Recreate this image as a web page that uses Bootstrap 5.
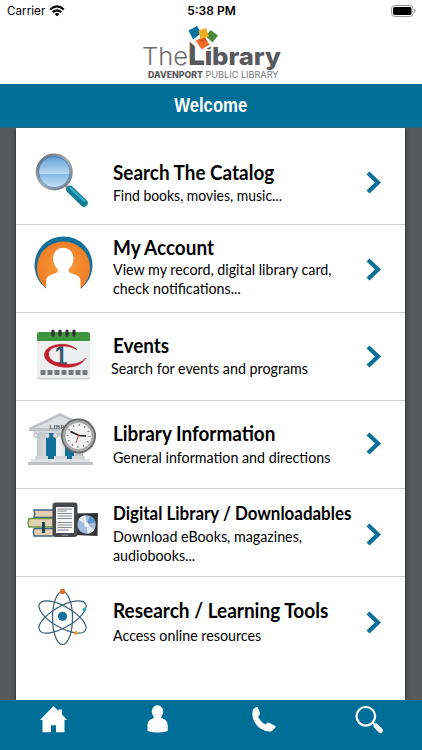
<!DOCTYPE html>
<html lang="en">
<head>
  <meta charset="UTF-8" />
  <meta name="viewport" content="width=device-width, initial-scale=1" />
  <title>Davenport Public Library</title>
  <link href="https://cdn.jsdelivr.net/npm/bootstrap@5.3.0/dist/css/bootstrap.min.css" rel="stylesheet" />
  <style>
    body {
      height: 750px;
      overflow: hidden;
      background: #58595b;
      color: #000;
      font-family: Lato, "Open Sans", sans-serif;
    }

    svg {
      display: block;
      flex-shrink: 0;
    }

    .status-bar {
      height: 22px;
      padding: 0 6px 0 7px;
      font: 400 11.7px/22px Inter, sans-serif;
    }

    .status-side {
      width: 120px;
    }

    .status-time {
      font-weight: 600;
      font-size: 12px;
    }

    .brand-area {
      height: 62px;
    }

    .page-title {
      position: relative;
      height: 44px;
      background: #006f98;
      color: #fff;
      font: bold 20px/42px "Liberation Sans", sans-serif;
      border-bottom: 1px solid #27647c;
      z-index: 1;
    }

    .page-title span {
      transform: scaleX(.835);
    }

    .menu-panel {
      width: 389px;
      height: 572px;
      margin-left: 16px;
      box-shadow: 0 0 4px #222;
    }

    .menu-row {
      height: 88px;
      color: #000;
      border-bottom: 1px solid #cfcfd1;
    }

    .menu-row:first-child { height: 97px; }
    .menu-row:last-child { height: 123px; border: 0; }

    .menu-copy {
      width: 252px;
      white-space: nowrap;
    }

    .menu-title {
      font-size: 20px;
      line-height: 24px;
      font-weight: 700;
      transform: scaleX(.945);
      transform-origin: left;
      margin: 0;
    }

    .menu-desc {
      font-size: 15.5px;
      line-height: 18.5px;
      transform: scaleX(.92);
      transform-origin: left;
      margin: 0;
    }

    .row-catalog .menu-copy { padding-top: 32px; }
    .row-catalog .menu-desc { margin-top: 2px; transform: scaleX(.9); }
    .row-catalog .chevron { margin-top: 43px; }
    .row-account .menu-copy { padding-top: 10px; }
    .row-account .menu-desc { margin-top: 1px; }
    .row-account .chevron { margin-top: 33px; }
    .row-events .menu-copy { padding-top: 20px; }
    .row-events .menu-desc { margin: 2px 0 0 -2px; }
    .row-events .chevron { margin-top: 32px; }
    .row-info .menu-copy { padding-top: 20px; }
    .row-info .menu-desc { margin-top: 3px; }
    .row-info .chevron { margin-top: 31px; }
    .row-digital .menu-copy { padding-top: 12px; }
    .row-digital .menu-title { font-size: 18.5px; transform: scaleX(.915); }
    .row-digital .menu-desc { margin-top: 2px; }
    .row-digital .chevron { margin-top: 34px; }
    .row-research .menu-copy { padding-top: 21px; }
    .row-research .menu-title { transform: scaleX(.95); }
    .row-research .menu-desc { margin-top: 4px; }
    .row-research .chevron { margin-top: 34px; }

    .tab-bar {
      position: relative;
      height: 50px;
      background: #006f98;
    }
  </style>
</head>
<body>
  <header class="bg-white">
    <div class="status-bar d-flex justify-content-between align-items-center">
      <div class="status-side d-flex align-items-center gap-1">
        <span>Carrier</span>
        <svg width="16" height="12" viewBox="0 0 16 12" fill="none" stroke="#000" stroke-width="2.2">
          <path d="M1.2 4.5Q8-1.6 14.8 4.5M3.7 7.3Q8 3.3 12.3 7.3" />
          <path d="M8 11.3 5.6 8.9Q8 7 10.4 8.9Z" fill="#000" stroke="none" />
        </svg>
      </div>
      <span class="status-time">5:38 PM</span>
      <div class="status-side d-flex justify-content-end">
        <svg width="25" height="12" viewBox="0 0 25 12">
          <rect x=".5" y=".5" width="21.5" height="11" rx="3.2" fill="#fff" stroke="#999" />
          <rect x="2" y="2" width="18.5" height="8" rx="1.8" />
          <path d="M23.3 4v4q1.4-.7 1.4-2t-1.4-2" fill="#999" />
        </svg>
      </div>
    </div>
    <div class="brand-area d-flex justify-content-center">
      <svg width="160" height="62" viewBox="131 22 160 62">
        <g font-family="Inter, sans-serif">
          <text x="142" y="65" font-size="24" font-weight="300" fill="#6d6e71" textLength="46" lengthAdjust="spacingAndGlyphs">The</text>
          <text x="188" y="65" font-size="32" font-weight="800" fill="#58595b" textLength="17" lengthAdjust="spacingAndGlyphs">L</text>
          <text x="204.500" y="65" font-size="26" font-weight="800" fill="#58595b" textLength="8" lengthAdjust="spacingAndGlyphs">i</text>
          <text x="212" y="65" font-size="24" font-weight="800" fill="#58595b" textLength="69" lengthAdjust="spacingAndGlyphs">brary</text>
          <text x="148" y="77.500" font-size="8.500" font-weight="800" fill="#58595b" textLength="55" lengthAdjust="spacingAndGlyphs">DAVENPORT</text>
          <text x="205.500" y="77.500" font-size="8.500" font-weight="400" fill="#77787b" textLength="73" lengthAdjust="spacingAndGlyphs">PUBLIC LIBRARY</text>
        </g>
        <path d="M186 38.500 201 51.500 212 46 214 38Z" fill="#fff" />
        <path d="m188.500 30.500 8.500-4.500 4.500 7-8.500 6.500Z" fill="#0873a1" />
        <path d="m210.500 30 7.500 5.500-5.500 7-6.500-6Z" fill="#48883b" />
        <path d="m195.800 40.500 8.700-4 5 8-8 5Z" fill="#ee6b26" />
        <path d="m198.500 30.500 7.500-2.500 3 8.500-8.500 2.500Z" fill="#efad25" />
        <path d="m198.500 39.300 2 .700 5-1.500.5 1.500-4 2.500Z" fill="#9b4c1b" opacity=".55" />
      </svg>
    </div>
  </header>

  <div class="page-title d-flex justify-content-center"><span>Welcome</span></div>

  <main class="menu-panel bg-white">
    <a href="#" class="menu-row row-catalog d-flex text-decoration-none">
      <svg width="97" height="96" viewBox="16 128 97 96">
        <defs>
          <linearGradient id="lens" x2="0" y2="1">
            <stop stop-color="#5b98d3" />
            <stop offset=".55" stop-color="#b9d8f3" />
            <stop offset=".57" stop-color="#86b9e6" />
            <stop offset="1" stop-color="#d0e9fc" />
          </linearGradient>
          <linearGradient id="rim" x2="1" y2="1">
            <stop stop-color="#59636d" />
            <stop offset=".5" stop-color="#a9afb5" />
            <stop offset="1" stop-color="#69737c" />
          </linearGradient>
        </defs>
        <path d="m64 184 5 5" stroke="#899096" stroke-width="3" />
        <path d="m70 189.500 14 13.500" stroke="#137e98" stroke-width="7.500" stroke-linecap="round" />
        <path d="m70.500 188 14 13" stroke="#3bafc1" stroke-width="2" stroke-linecap="round" />
        <circle cx="54.300" cy="172" r="17.200" fill="url(#lens)" stroke="url(#rim)" stroke-width="2.600" />
        <circle cx="54.300" cy="172" r="15.700" fill="none" stroke="#3d6b95" stroke-width=".6" />
      </svg>
      <div class="menu-copy">
        <h2 class="menu-title">Search The Catalog</h2>
        <p class="menu-desc">Find books, movies, music...</p>
      </div>
      <svg class="chevron" width="18" height="23" viewBox="0 0 18 23"><path d="m3 2 10 9.500L3 21" fill="none" stroke="#0b7198" stroke-width="4.200" /></svg>
    </a>

    <a href="#" class="menu-row row-account d-flex text-decoration-none">
      <svg width="97" height="87" viewBox="16 225 97 87">
        <defs>
          <radialGradient id="sun"><stop stop-color="#f6a03d" /><stop offset="1" stop-color="#ef7d25" /></radialGradient>
        </defs>
        <path d="M46 288.500A29 29 0 1 1 81 288.500Z" fill="#156f9c" />
        <path d="M46.500 288.500A26.600 26.600 0 1 1 80.500 288.500Z" fill="url(#sun)" />
        <path d="M46 290v-9q0-4.500 4.500-6l5.500-2q3-1.200 1.500-4-4-4-4.500-10c0-15 20.500-15 20.500 0q-.5 6-4.500 10-1.500 2.800 1.500 4l5.500 2q4.500 1.500 4.500 6v9Z" fill="#fff" />
      </svg>
      <div class="menu-copy">
        <h2 class="menu-title">My Account</h2>
        <p class="menu-desc">View my record, digital library card,<br />check notifications...</p>
      </div>
      <svg class="chevron" width="18" height="23" viewBox="0 0 18 23"><path d="m3 2 10 9.500L3 21" fill="none" stroke="#0b7198" stroke-width="4.200" /></svg>
    </a>

    <a href="#" class="menu-row row-events d-flex text-decoration-none">
      <svg width="97" height="87" viewBox="16 313 97 87">
        <rect x="37" y="332" width="53" height="47.500" rx="2.500" fill="#c9cbcd" />
        <rect x="37" y="332" width="53" height="46" rx="2.500" fill="#eceeef" />
        <path d="M37 341v-6.500q0-2.500 2.500-2.500h48q2.500 0 2.500 2.500v6.500Z" fill="#3f9440" />
        <path d="M53 331v4M60 331v4M67 331v4M74 331v4" stroke="#303335" stroke-width="3.200" stroke-linecap="round" />
        <text x="54.500" y="365" font-family="Liberation Sans, sans-serif" font-weight="bold" font-size="27" fill="#3b5d70" textLength="13" lengthAdjust="spacingAndGlyphs">1</text>
        <path d="M77 350C69 340.500 46 343.500 44.500 354c-1 10 18 15.500 29 12.500 7-2 11-5.500 12-8.500-3 4-9 6-15 6.200-10 .8-21.500-2.200-22-9.700-.5-9.500 19.500-11 28.500-4.500Z" fill="#c11d2a" stroke="#c11d2a" stroke-width=".6" />
        <path d="M40.500 372.500h47" stroke="#74797d" stroke-width="5" stroke-dasharray="5 2" />
      </svg>
      <div class="menu-copy">
        <h2 class="menu-title">Events</h2>
        <p class="menu-desc">Search for events and programs</p>
      </div>
      <svg class="chevron" width="18" height="23" viewBox="0 0 18 23"><path d="m3 2 10 9.500L3 21" fill="none" stroke="#0b7198" stroke-width="4.200" /></svg>
    </a>

    <a href="#" class="menu-row row-info d-flex text-decoration-none">
      <svg width="97" height="87" viewBox="16 401 97 87">
        <defs>
          <linearGradient id="pillar"><stop stop-color="#c3c6ca" /><stop offset=".45" stop-color="#f2f3f5" /><stop offset="1" stop-color="#b9bdc1" /></linearGradient>
        </defs>
        <path d="M42 433h38v26H42Z" fill="#146f98" />
        <path d="M29 431v-3l31-15 31 15v3Z" fill="#bfc3c7" />
        <path d="m35 428 25-12 25 12Z" fill="#dfe2e5" />
        <path d="M33 431h54v2H33Z" fill="#d8dadd" />
        <text x="49" y="428.500" font-family="Liberation Serif, serif" font-weight="bold" font-size="6.500" fill="#63676b">LIBRARY</text>
        <path d="M37 435h9v22h-9ZM56 435h9v22h-9ZM74 435h9v22h-9Z" fill="url(#pillar)" />
        <path d="M36.500 434.500h10M55.500 434.500h10M74.500 434.500h8" stroke="#c6c9cd" stroke-width="4" stroke-linecap="round" />
        <path d="M35 456h13v4H35ZM54 456h13v4H54ZM72 456h13v4H72Z" fill="#d3d6d9" />
        <path d="M31 459h59v3H31Z" fill="#e0e2e5" />
        <path d="M28 462h65v3H28Z" fill="#bec1c5" />
        <g fill="#dcdee1" stroke="#a9acb0" stroke-width=".6">
          <circle cx="36" cy="435.500" r="2.400" /><circle cx="47" cy="435.500" r="2.400" /><circle cx="55.500" cy="435.500" r="2.400" />
        </g>
        <circle cx="78.500" cy="436" r="17.500" fill="#66686a" />
        <circle cx="78.500" cy="436" r="15.700" fill="#a9abad" />
        <circle cx="78.500" cy="436" r="13.700" fill="#f2f2f2" stroke="#888" stroke-width=".7" />
        <circle cx="78.500" cy="436" r="11" fill="none" stroke="#777" stroke-width="2" stroke-dasharray="1 4.760" />
        <path d="m70.500 431.500 8.500 4 7 .500" fill="none" stroke="#222" stroke-width="1.500" />
        <path d="m79 434-3 9" stroke="#d34848" />
      </svg>
      <div class="menu-copy">
        <h2 class="menu-title">Library Information</h2>
        <p class="menu-desc">General information and directions</p>
      </div>
      <svg class="chevron" width="18" height="23" viewBox="0 0 18 23"><path d="m3 2 10 9.500L3 21" fill="none" stroke="#0b7198" stroke-width="4.200" /></svg>
    </a>

    <a href="#" class="menu-row row-digital d-flex text-decoration-none">
      <svg width="97" height="87" viewBox="16 489 97 87">
        <path d="M34 510h20v8H34ZM34 528h20v8H34Z" fill="#e4cdb0" />
        <path d="M53 510H34q1.500 4 0 7.500h19M53 528.500H34q-1.500 4 0 7.500h19" fill="none" stroke="#38648a" stroke-width="1.400" />
        <path d="M53 518.500H29q-1.500 4 0 8.500h24Z" fill="#e4d1b4" stroke="#69953f" stroke-width="1.500" />
        <path d="M42 522h3v11h-3Z" fill="#17475b" />
        <path d="m74 513.500 24-.500-.5 23-23.500-1Z" fill="#323437" />
        <circle cx="86.500" cy="524.500" r="9.300" fill="#a4bddf" />
        <path d="m86.500 524.500-8-5a9.300 9.300 0 0 1 7-4.300ZM86.500 524.500l8 5a9.300 9.300 0 0 1-7 4.300Z" fill="#e6eaf5" />
        <path d="m86.500 524.500 3.500-8.600a9.300 9.300 0 0 1 5.500 6Z" fill="#5f94ca" />
        <circle cx="86.500" cy="524.500" r="2.200" fill="#fff" />
        <rect x="52.500" y="502.500" width="25" height="34.500" rx="3" fill="#46484b" />
        <path d="M56 507h18v26H56Z" fill="#f6f6f6" />
        <path d="M57.500 509h14.500M57.500 511h9M57.500 513.500h14.500M57.500 516h14.500M57.500 518.500h14.500M57.500 522.500h14.500M57.500 525h14.500M57.500 527.500h14.500M57.500 530h11" stroke="#85888b" stroke-width="1.200" />
        <path d="M62 535.200h6" stroke="#999" />
      </svg>
      <div class="menu-copy">
        <h2 class="menu-title">Digital Library / Downloadables</h2>
        <p class="menu-desc">Download eBooks, magazines,<br />audiobooks...</p>
      </div>
      <svg class="chevron" width="18" height="23" viewBox="0 0 18 23"><path d="m3 2 10 9.500L3 21" fill="none" stroke="#0b7198" stroke-width="4.200" /></svg>
    </a>

    <a href="#" class="menu-row row-research d-flex text-decoration-none">
      <svg width="97" height="87" viewBox="16 577 97 87">
        <g fill="none" stroke="#3b6078" stroke-width="1.200">
          <ellipse cx="62.500" cy="618" rx="10" ry="26.500" />
          <ellipse cx="62.500" cy="617" rx="10.500" ry="26.500" transform="rotate(60 62.500 617)" />
          <ellipse cx="62.500" cy="617" rx="10.500" ry="26.500" transform="rotate(-60 62.500 617)" />
        </g>
        <circle cx="62.500" cy="616.300" r="4.600" fill="#1671a0" />
        <circle cx="62.500" cy="591.500" r="2.700" fill="#df722a" />
        <circle cx="84.500" cy="609.500" r="1.900" fill="#36a9b4" />
        <circle cx="76" cy="633" r="1.900" fill="#eba62b" />
      </svg>
      <div class="menu-copy">
        <h2 class="menu-title">Research / Learning Tools</h2>
        <p class="menu-desc">Access online resources</p>
      </div>
      <svg class="chevron" width="18" height="23" viewBox="0 0 18 23"><path d="m3 2 10 9.500L3 21" fill="none" stroke="#0b7198" stroke-width="4.200" /></svg>
    </a>
  </main>

  <nav class="tab-bar d-flex">
    <a href="#" class="flex-fill" aria-label="Home">
      <svg class="mx-auto" width="105" height="50" viewBox="0 700 105 50" fill="#fff"><path d="m53.500 706 5 5v-1.500h3.500v5l5 5.500h-2.500v12.300h-8.500v-7h-5v7h-8.500v-12.300H40Z" /></svg>
    </a>
    <a href="#" class="flex-fill" aria-label="Account">
      <svg class="mx-auto" width="105" height="50" viewBox="105 700 105 50" fill="#fff"><path d="M147.500 731v-5c0-5 2-6.500 6.500-8-6-13 13-13 7 0 4.500 1.500 6.700 3 6.700 8v5q-10 3-20.200 0Z" /><ellipse cx="157.500" cy="711.500" rx="5.700" ry="6.300" /></svg>
    </a>
    <a href="#" class="flex-fill" aria-label="Phone">
      <svg class="mx-auto" width="106" height="50" viewBox="210 700 106 50" fill="#fff"><path d="m253 709.500 3-2.500q1.500-.5 2 1l2 5q.5 1.500-2 3.500 3 6 7.500 8 2-2.500 3.500-1.700l5.500 2.700q2 1 .5 2.500l-3 3c-7 3-23-7-19-21.500Z" /></svg>
    </a>
    <a href="#" class="flex-fill" aria-label="Search">
      <svg class="mx-auto" width="106" height="50" viewBox="316 700 106 50" fill="none" stroke="#fff"><circle cx="365.800" cy="716.300" r="9.300" stroke-width="2.200" /><path d="m373 723 2.500 2.500" stroke-width="2" /><path d="m376 726 4.500 4.500" stroke-width="5" stroke-linecap="round" /></svg>
    </a>
  </nav>

  <script src="https://cdn.jsdelivr.net/npm/bootstrap@5.3.0/dist/js/bootstrap.bundle.min.js"></script>
</body>
</html>
